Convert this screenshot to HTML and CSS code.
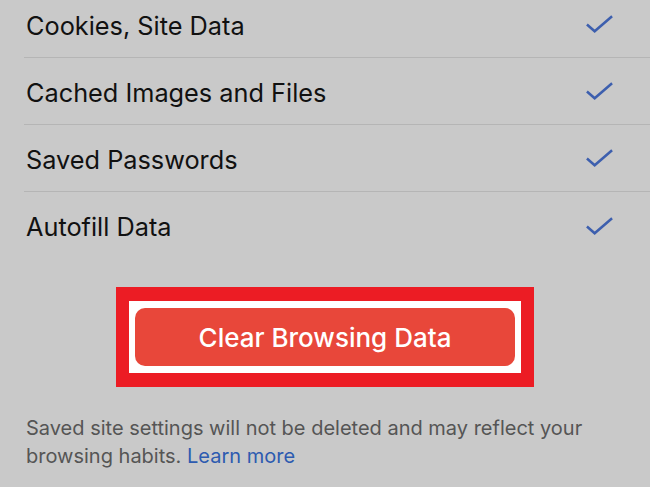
FILE: index.html
```html
<!DOCTYPE html>
<html>
<head>
<meta charset="utf-8">
<link rel="stylesheet" href="styles.css">
</head>
<body>
<div class="page">
  <ul class="list">
    <li class="row"><span class="label">Cookies, Site Data</span><svg class="check" viewBox="0 0 30 20"><path d="M2 10.5 L10 17.5 L28 2"/></svg></li>
    <li class="row"><span class="label">Cached Images and Files</span><svg class="check" viewBox="0 0 30 20"><path d="M2 10.5 L10 17.5 L28 2"/></svg></li>
    <li class="row"><span class="label">Saved Passwords</span><svg class="check" viewBox="0 0 30 20"><path d="M2 10.5 L10 17.5 L28 2"/></svg></li>
    <li class="row last"><span class="label">Autofill Data</span><svg class="check" viewBox="0 0 30 20"><path d="M2 10.5 L10 17.5 L28 2"/></svg></li>
  </ul>
  <div class="highlight">
    <div class="inner">
      <button class="clear">Clear Browsing Data</button>
    </div>
  </div>
  <p class="note">Saved site settings will not be deleted and may reflect your browsing habits. <span class="link">Learn more</span></p>
</div>
</body>
</html>
```
FILE: styles.css
```css
* {
  box-sizing: border-box;
}
html, body {
  margin: 0;
  padding: 0;
  background: #c9c9c9;
  font-family: "Inter", "Liberation Sans", sans-serif;
}
.page {
  width: 650px;
  height: 487px;
  overflow: hidden;
}
.list {
  list-style: none;
  margin: -9px 0 0 24px;
  padding: 0;
}
.row {
  height: 67px;
  display: flex;
  align-items: center;
  justify-content: space-between;
  padding-left: 2px;
  padding-right: 36px;
  border-bottom: 1px solid #b5b5b5;
}
.row.last {
  border-bottom: none;
}
.label {
  font-size: 25.3px;
  color: #111;
  padding-top: 2px;
}
.check {
  width: 29px;
  height: 20px;
  fill: none;
  stroke: #3d5fae;
  stroke-width: 2.6;
}
.highlight {
  width: 418px;
  margin: 28px auto 0;
  padding: 7px 6px;
  background: #fff;
  border: 13px solid #ec1c24;
  border-top-width: 14px;
  border-bottom-width: 14px;
}
.inner {
  display: flex;
}
.clear {
  flex: 1;
  height: 58px;
  border: none;
  border-radius: 10px;
  background: #e8473a;
  color: #fff;
  font-family: "Inter", "Liberation Sans", sans-serif;
  font-size: 26px;
  font-weight: 500;
}
.note {
  margin: 27px 0 0 26px;
  width: 610px;
  font-size: 20px;
  line-height: 28px;
  color: #555;
}
.link {
  color: #2d5bb0;
}
```
